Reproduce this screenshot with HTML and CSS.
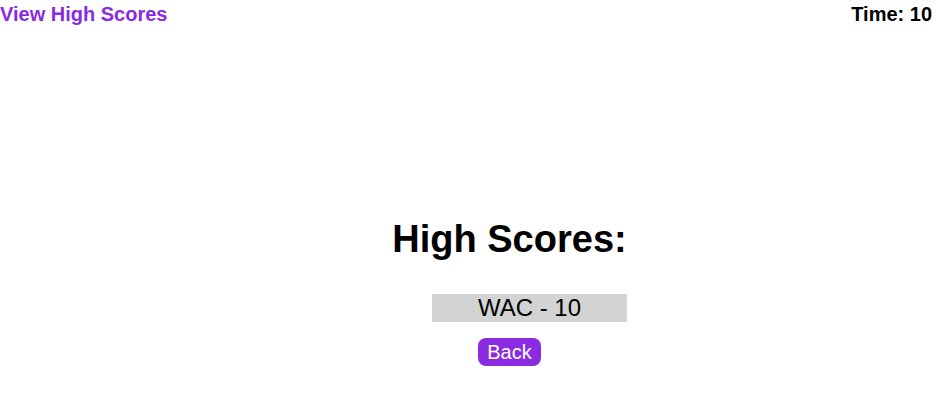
FILE: index.html
```html
<!DOCTYPE html>
<html>
<head>
<meta charset="utf-8">
<link rel="stylesheet" href="styles.css">
</head>
<body>
<header class="topbar">
  <a class="view-link" href="#">View High Scores</a>
  <div class="timer">Time: 10</div>
</header>
<main class="content">
  <h1 class="title">High Scores:</h1>
  <ul class="scores">
    <li class="score">WAC - 10</li>
  </ul>
  <button class="back">Back</button>
</main>
</body>
</html>
```
FILE: styles.css
```css
html, body {
  margin: 0;
  padding: 0;
  background: #fff;
  font-family: "Liberation Sans", Arial, sans-serif;
}
.topbar {
  display: flex;
  justify-content: space-between;
  align-items: flex-start;
  padding: 3px 5px 0 0;
  font-size: 20px;
  font-weight: bold;
  line-height: 23px;
}
.view-link {
  color: #8a2be2;
  text-decoration: none;
}
.timer {
  color: #000;
}
.content {
  margin-left: 82px;
  display: flex;
  flex-direction: column;
  align-items: center;
}
.title {
  margin: 192px 0 0 0;
  font-size: 38px;
  font-weight: bold;
  line-height: 42px;
}
.scores {
  list-style: none;
  margin: 34px 0 0 0;
  padding: 0 0 0 40px;
  width: 195px;
}
.score {
  background: #d3d3d3;
  font-size: 24px;
  line-height: 28px;
  height: 28px;
  text-align: center;
}
.back {
  margin-top: 16px;
  background: #8a2be2;
  color: #fff;
  border: none;
  border-radius: 8px;
  font-family: "Liberation Sans", Arial, sans-serif;
  font-size: 20px;
  line-height: 24px;
  padding: 2px 9px;
}
```
